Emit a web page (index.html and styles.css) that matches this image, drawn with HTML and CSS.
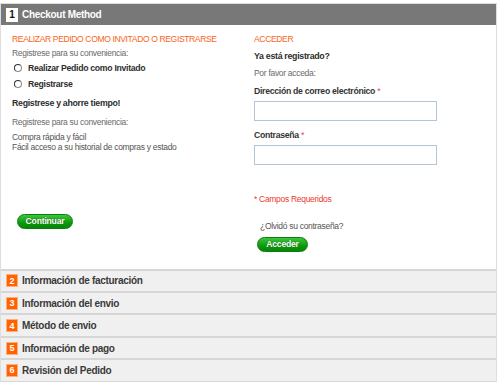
FILE: index.html
```html
<!DOCTYPE html>
<html lang="es">
<head>
  <meta charset="UTF-8" />
  <meta name="viewport" content="width=device-width, initial-scale=1.0" />
  <title>Checkout</title>
  <link rel="stylesheet" href="styles.css">
</head>
<body>
  <div class="checkout">
    <section class="step active">
      <h2 class="step-title"><span class="step-num">1</span>Checkout Method</h2>
      <div class="step-body">
        <div class="col">
          <h3 class="col-title">Realizar Pedido como Invitado o Registrarse</h3>
          <p class="note">Registrese para su conveniencia:</p>
          <ul class="options">
            <li><span class="radio"></span>Realizar Pedido como Invitado</li>
            <li><span class="radio"></span>Registrarse</li>
          </ul>
          <h4 class="lead">Registrese y ahorre tiempo!</h4>
          <p class="note spaced">Registrese para su conveniencia:</p>
          <ul class="benefits">
            <li>Compra rápida y fácil</li>
            <li>Fácil acceso a su historial de compras y estado</li>
          </ul>
          <button type="button" class="btn btn-continue">Continuar</button>
        </div>
        <form class="col login">
          <h3 class="col-title">Acceder</h3>
          <h4 class="lead first">Ya está registrado?</h4>
          <p class="note please">Por favor acceda:</p>
          <label class="field-label">Dirección de correo electrónico <em>*</em></label>
          <input type="email" class="field">
          <label class="field-label pass">Contraseña <em>*</em></label>
          <input type="password" class="field">
          <p class="required">* Campos Requeridos</p>
          <a class="forgot">¿Olvidó su contraseña?</a>
          <button type="button" class="btn btn-login">Acceder</button>
        </form>
      </div>
    </section>
    <section class="step"><h2 class="step-title"><span class="step-num">2</span>Información de facturación</h2></section>
    <section class="step"><h2 class="step-title"><span class="step-num">3</span>Información del envio</h2></section>
    <section class="step"><h2 class="step-title"><span class="step-num">4</span>Método de envio</h2></section>
    <section class="step"><h2 class="step-title"><span class="step-num">5</span>Información de pago</h2></section>
    <section class="step last"><h2 class="step-title"><span class="step-num">6</span>Revisión del Pedido</h2></section>
  </div>
</body>
</html>
```

FILE: styles.css
```css
* {
  margin: 0;
  padding: 0;
  box-sizing: border-box;
  font-family: 'Liberation Sans', Arial, sans-serif;
}

body {
  background: #fff;
}

.checkout {
  width: 497px;
  margin-top: 3px;
  border: 1px solid #dedede;
  border-bottom: none;
}

.step-title {
  display: flex;
  align-items: center;
  height: 22.4px;
  padding-left: 5px;
  background: #f0f0f0;
  border-top: 2px solid #d6d6d6;
  color: #3a3a3a;
  font-size: 10px;
  font-weight: 700;
  letter-spacing: -0.3px;
}

.step.last .step-title {
  height: 24.4px;
  border-bottom: 2px solid #d6d6d6;
}

.step-num {
  display: inline-flex;
  justify-content: center;
  align-items: center;
  width: 12px;
  height: 13px;
  margin-right: 4px;
  background: #ff6200;
  border: 1px solid #ffb07a;
  color: #fff;
  font-size: 9px;
  font-weight: 700;
  letter-spacing: 0;
}

.step.active .step-title {
  height: 21px;
  border-top: none;
  background: #787878;
  color: #fff;
}

.step.active .step-num {
  width: 12px;
  height: 14px;
  background: #fff;
  border: none;
  color: #111;
  font-size: 10px;
}

.step-body {
  display: grid;
  grid-template-columns: 1fr 1fr;
  column-gap: 8px;
  padding: 8px 8px 17px 11px;
  background: #fff;
}

.col {
  display: flex;
  flex-direction: column;
  align-items: flex-start;
}

.col-title {
  line-height: 12px;
  color: #fa6420;
  font-size: 8.6px;
  font-weight: 400;
  letter-spacing: -0.4px;
  text-transform: uppercase;
}

.note {
  margin-top: 3px;
  line-height: 10px;
  color: #6a6a6a;
  font-size: 8.5px;
  letter-spacing: -0.3px;
}

.note.spaced {
  margin-top: 8px;
}

.note.please {
  margin-top: 6.5px;
}

.options {
  list-style: none;
  margin-top: 4px;
}

.options li {
  display: flex;
  align-items: center;
  height: 12px;
  margin-bottom: 3.5px;
  color: #2e2e2e;
  font-size: 8.7px;
  font-weight: 700;
  letter-spacing: -0.3px;
}

.radio {
  width: 8px;
  height: 8px;
  margin: 0 6px 0 2px;
  border: 1px solid #8a8a8a;
  border-top-color: #333;
  border-left-color: #333;
  border-radius: 50%;
  background: #fff;
}

.lead {
  margin-top: 4px;
  line-height: 12px;
  color: #2e2e2e;
  font-size: 8.8px;
  font-weight: 700;
  letter-spacing: -0.3px;
}

.lead.first {
  margin-top: 4.5px;
}

.benefits {
  list-style: none;
  margin-top: 5px;
  line-height: 10px;
  color: #555;
  font-size: 8.5px;
  letter-spacing: -0.3px;
}

.btn {
  height: 15px;
  padding: 0;
  background: linear-gradient(#3fc43f, #0c9a0c 60%, #068606);
  border: 1px solid #0a7d0a;
  border-radius: 8px;
  color: #fff;
  font-size: 8.6px;
  font-weight: 700;
  line-height: 13px;
  letter-spacing: -0.2px;
  text-shadow: 0 0 1px #064f06;
  cursor: pointer;
}

.btn-continue {
  width: 56px;
  margin: 62px 0 0 5px;
}

.field-label {
  margin-top: 7px;
  line-height: 12px;
  color: #333;
  font-size: 8.7px;
  font-weight: 700;
  letter-spacing: -0.3px;
}

.field-label em {
  color: #ee4a3a;
  font-style: normal;
  font-weight: 400;
}

.field-label.pass {
  margin-top: 8.7px;
}

.field {
  width: 183px;
  height: 20px;
  margin-top: 3.5px;
  border: 1px solid #b4c5d6;
  outline: none;
}

.required {
  margin-top: 29px;
  line-height: 10px;
  color: #ec3b2c;
  font-size: 8.5px;
  letter-spacing: -0.3px;
}

.forgot {
  margin: 17px 0 0 6px;
  line-height: 10px;
  color: #555;
  font-size: 8.5px;
  letter-spacing: -0.3px;
}

.btn-login {
  width: 51px;
  margin: 6px 0 0 3px;
}
```
